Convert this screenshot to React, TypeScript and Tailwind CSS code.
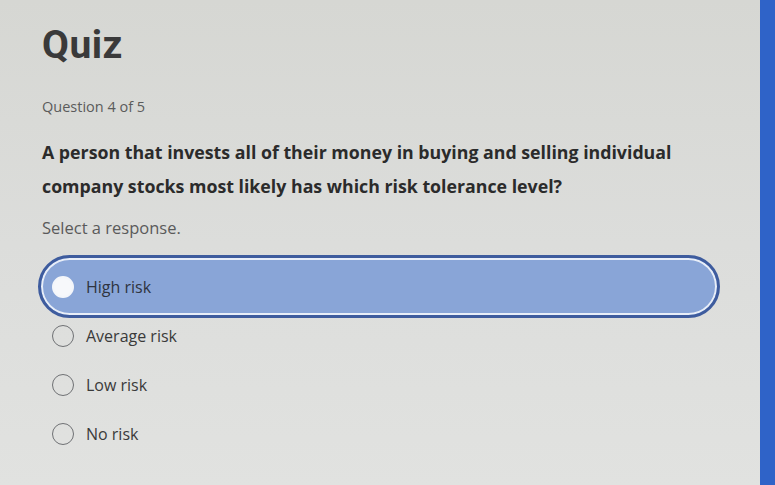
import React from 'react';

const OPTIONS = ['High risk', 'Average risk', 'Low risk', 'No risk'];

function Radio({ selected }: { selected: boolean }) {
  return (
    <span
      className={`h-[22px] w-[22px] shrink-0 rounded-full ${
        selected ? 'border-2 border-[#f4f6fa] bg-[#f7f8fb]' : 'border-[1.5px] border-[#6f7174] bg-transparent'
      }`}
    />
  );
}

export default function App() {
  const selected = 0;

  return (
    <div className="flex h-[485px] w-[775px] overflow-hidden bg-[#2f63c8] font-['Open_Sans',sans-serif]">
      {/* panel */}
      <div className="flex min-w-0 flex-1 flex-col bg-gradient-to-b from-[#d6d7d3] via-[#dcdddb] to-[#e1e2e0] pl-[42px]">
        <h1 className="mt-[22px] font-['Roboto',sans-serif] text-[39px] font-bold leading-[46px] tracking-[0.5px] text-[#3a3a3a]">
          Quiz
        </h1>

        <p className="mt-[30px] text-[14.5px] leading-[18px] text-[#5b5b5b]">Question 4 of 5</p>

        <p className="mt-[19px] whitespace-nowrap text-[17.75px] font-bold leading-[34px] text-[#2b2b2b]">
          A person that invests all of their money in buying and selling individual
          <br />
          company stocks most likely has which risk tolerance level?
        </p>

        <p className="mt-[15px] text-[16.5px] leading-[20px] text-[#5a5a5a]">Select a response.</p>

        {/* options: each row is 49px high, the selected pill spills over its row */}
        <div className="mt-[24px] -ml-[4px] flex flex-col">
          {OPTIONS.map((label, i) =>
            i === selected ? (
              <div key={label} className="flex h-[49px] items-center">
                <div className="flex h-[63px] w-[682px] shrink-0 items-center gap-[12px] rounded-full border-[3px] border-[#3e5c9e] bg-[#89a5d7] pl-[11px] shadow-[inset_0_0_0_2px_#e8eef8]">
                  <Radio selected />
                  <span className="text-[16px] text-[#2f3440]">{label}</span>
                </div>
              </div>
            ) : (
              <div key={label} className="flex h-[49px] items-center gap-[12px] pl-[14px]">
                <Radio selected={false} />
                <span className="text-[16px] text-[#3a3a3a]">{label}</span>
              </div>
            )
          )}
        </div>
      </div>

      {/* blue edge of the screen */}
      <div className="w-[15px] shrink-0 bg-[#2f63c8]" />
    </div>
  );
}
